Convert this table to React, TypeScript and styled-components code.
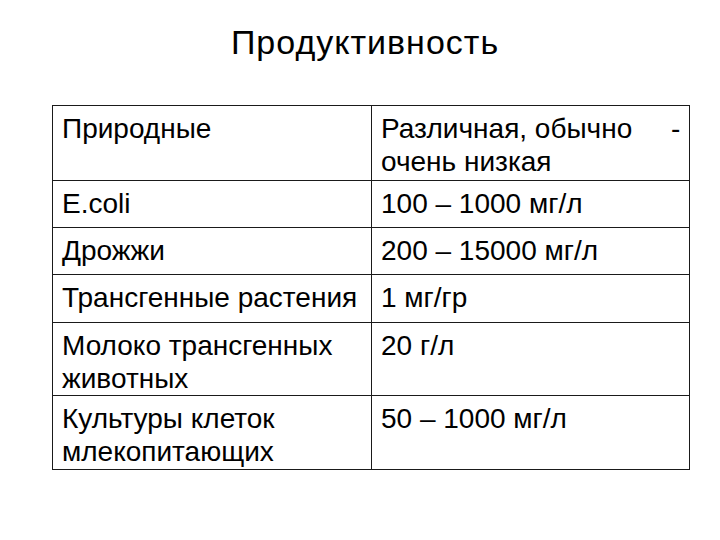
import styled, { createGlobalStyle } from 'styled-components';

const GlobalStyle = createGlobalStyle`
    html, body {
        margin: 0;
        padding: 0;
        background: #ffffff;
    }
    body {
        font-family: 'Liberation Sans', Arial, sans-serif;
        color: #000000;
    }
`;

const Slide = styled.div({
    width: '720px',
    height: '540px',
    boxSizing: 'border-box',
    padding: '20px 0 0 52px',
    display: 'flex',
    flexDirection: 'column',
    background: '#ffffff'
});

const Title = styled.h1({
    margin: '0 0 0 0',
    width: '626px',
    height: '85px',
    textAlign: 'center',
    fontFamily: "'Liberation Sans', Arial, sans-serif",
    fontWeight: 400,
    fontSize: '34px',
    letterSpacing: '1px',
    lineHeight: '44px',
    color: '#000000'
});

const Table = styled.table({
    borderCollapse: 'collapse',
    width: '637px',
    tableLayout: 'fixed'
});

const Row = styled.tr<{ $height: number }>((props) => ({
    height: props.$height + 'px'
}));

const Cell = styled.td({
    border: '1.5px solid #1a1a1a',
    padding: '6px 2px 0 9px',
    verticalAlign: 'top',
    fontSize: '28px',
    lineHeight: '33px',
    whiteSpace: 'pre-wrap',
    color: '#000000',
    boxSizing: 'border-box'
});

const rows: { name: string; value: string; height: number }[] = [
    { name: 'Природные', value: 'Различная, обычно     - очень низкая', height: 75 },
    { name: 'E.coli', value: '100 – 1000 мг/л', height: 47 },
    { name: 'Дрожжи', value: '200 – 15000 мг/л', height: 47 },
    { name: 'Трансгенные растения', value: '1 мг/гр', height: 48 },
    { name: 'Молоко трансгенных животных', value: '20 г/л', height: 73 },
    { name: 'Культуры клеток млекопитающих', value: '50 – 1000 мг/л', height: 74 }
];

export default function App() {
    return (
        <Slide>
            <GlobalStyle />
            <Title>Продуктивность</Title>
            <Table>
                <colgroup>
                    <col style={{ width: '319px' }} />
                    <col style={{ width: '318px' }} />
                </colgroup>
                <tbody>
                    {rows.map((row) => (
                        <Row key={row.name} $height={row.height}>
                            <Cell>{row.name}</Cell>
                            <Cell>{row.value}</Cell>
                        </Row>
                    ))}
                </tbody>
            </Table>
        </Slide>
    );
}
